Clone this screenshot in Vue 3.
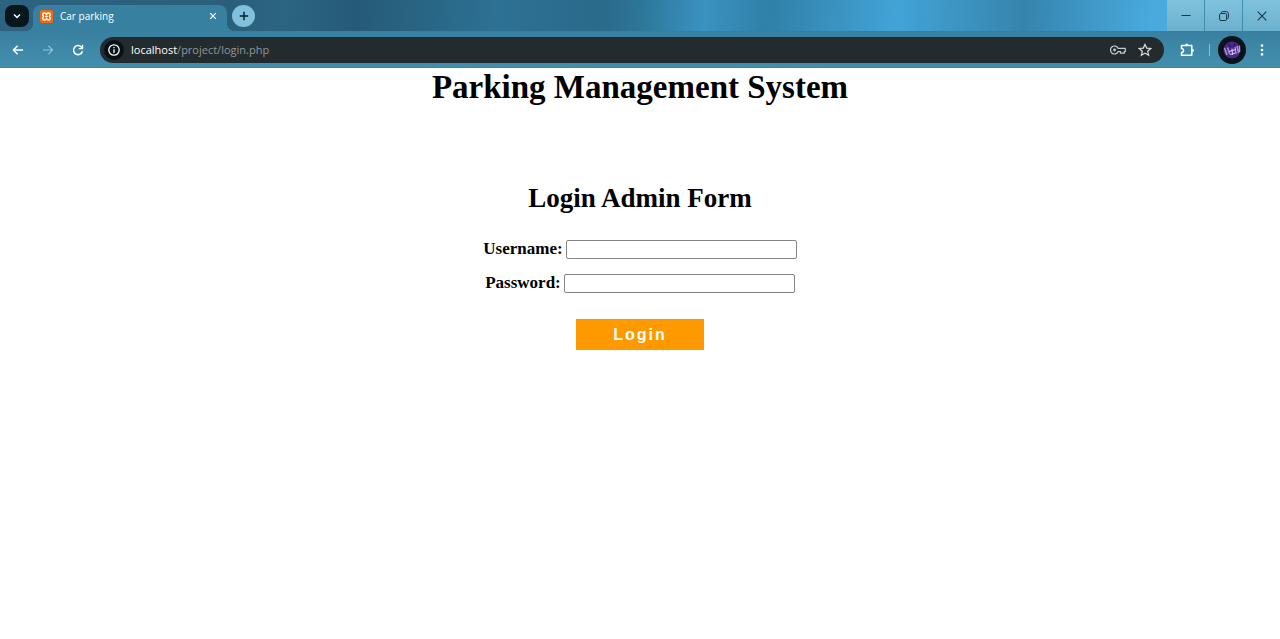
<script setup>
import { ref } from 'vue'

const username = ref('')
const password = ref('')
const address = 'localhost'
const path = '/project/login.php'
</script>

<template>
  <div class="browser">
    <header class="chrome">
      <div class="tabstrip">
        <button class="tab-search" aria-label="Search tabs">
          <svg width="10" height="10" viewBox="0 0 10 10"><path d="M2 3.5 5 6.5 8 3.5" fill="none" stroke="#fff" stroke-width="1.5" /></svg>
        </button>
        <div class="tab">
          <svg class="favicon" width="13" height="13" viewBox="0 0 13 13">
            <rect width="13" height="13" rx="2" fill="#f4690f" />
            <path d="M6.5 4.4Q6 3 4.4 3 2.8 3 2.8 4.6 2.8 5.8 3.6 6.5 2.8 7.2 2.8 8.4 2.8 10 4.4 10 6 10 6.5 8.6 7 10 8.6 10 10.2 10 10.2 8.4 10.2 7.2 9.4 6.5 10.2 5.8 10.2 4.6 10.2 3 8.6 3 7 3 6.5 4.4ZM5.3 6.5H7.7" fill="none" stroke="#fff" stroke-width="1.5" stroke-linejoin="round" />
          </svg>
          <span class="tab-title">Car parking</span>
          <button class="tab-close" aria-label="Close tab">
            <svg width="8" height="8" viewBox="0 0 8 8"><path d="M1.2 1.2 6.8 6.8M6.8 1.2 1.2 6.8" stroke="#fff" stroke-width="1.2" /></svg>
          </button>
        </div>
        <button class="new-tab" aria-label="New tab">
          <svg width="10" height="10" viewBox="0 0 10 10"><path d="M5 .8V9.2M.8 5H9.2" stroke="#08222c" stroke-width="1.5" /></svg>
        </button>
        <div class="window-controls">
          <button aria-label="Minimize"><svg width="10" height="10" viewBox="0 0 10 10"><path d="M.5 4.5H9.5" stroke="#173744" /></svg></button>
          <button aria-label="Restore"><svg width="10" height="10" viewBox="0 0 10 10"><path d="M2.5 2.2V1.6Q2.5.6 3.5.6H7.4Q9.4.6 9.4 2.6V6.4Q9.4 7.5 8.2 7.5" fill="none" stroke="#173744" /><rect x=".6" y="2.5" width="7" height="7" rx="1.3" fill="none" stroke="#173744" /></svg></button>
          <button aria-label="Close"><svg width="10" height="10" viewBox="0 0 10 10"><path d="M.7.7 9.3 9.3M9.3.7.7 9.3" stroke="#173744" stroke-width="1.1" /></svg></button>
        </div>
      </div>

      <div class="toolbar">
        <nav class="history">
          <button aria-label="Back"><svg width="12" height="12" viewBox="0 0 12 12"><path d="M11 6H1.6M5.6 1.8 1.4 6 5.6 10.2" fill="none" stroke="#fff" stroke-width="1.4" /></svg></button>
          <button aria-label="Forward"><svg width="12" height="12" viewBox="0 0 12 12"><path d="M1 6H10.4M6.4 1.8 10.6 6 6.4 10.2" fill="none" stroke="#8fc6dc" stroke-width="1.2" /></svg></button>
          <button aria-label="Reload"><svg width="12" height="12" viewBox="0 0 12 12"><path d="M10.4 7.2A4.5 4.5 0 1 1 9.2 2.9L10.4 4.2" fill="none" stroke="#fff" stroke-width="1.5" /><path d="M11.2.8V5.2H6.8V3.9H9.9V.8Z" fill="#fff" /></svg></button>
        </nav>
        <div class="omnibox">
          <button class="site-info" aria-label="Site information">
            <svg width="12" height="12" viewBox="0 0 12 12"><circle cx="6" cy="6" r="5.2" fill="none" stroke="#fff" stroke-width="1.3" /><path d="M6 5.3V9M6 3V4.3" stroke="#fff" stroke-width="1.3" /></svg>
          </button>
          <span class="url">{{ address }}<span class="path">{{ path }}</span></span>
          <button class="key" aria-label="Manage passwords">
            <svg width="16" height="10" viewBox="0 0 16 10"><path d="M8.2 3.4A4 4 0 1 0 8.2 6.6H10.5V8.2H14.2V6.6H15.3V3.4Z" fill="none" stroke="#c3cccf" stroke-width="1.2" stroke-linejoin="round" /><circle cx="4.6" cy="5" r="1.4" fill="#c3cccf" /></svg>
          </button>
          <button class="star" aria-label="Bookmark this tab">
            <svg width="14" height="14" viewBox="0 0 14 14"><path d="M7 1.4 8.7 5.1 12.8 5.5 9.7 8.2 10.6 12.2 7 10.1 3.4 12.2 4.3 8.2 1.2 5.5 5.3 5.1Z" fill="none" stroke="#dbe1e3" stroke-width="1.2" /></svg>
          </button>
        </div>
        <button class="extensions" aria-label="Extensions">
          <svg width="15" height="14" viewBox="0 0 15 14"><path d="M1.5 2.5H11.8V12.2H1.5V9.4A2 2 0 0 0 1.5 5.4Z" fill="none" stroke="#fff" stroke-width="1.5" stroke-linejoin="round" /><path d="M5 2.2A1.7 1.7 0 0 1 8.4 2.2ZM12.2 5.7A1.7 1.7 0 0 1 12.2 9.1Z" fill="#fff" /></svg>
        </button>
        <span class="divider"></span>
        <button class="profile" aria-label="Profile">
          <svg width="28" height="28" viewBox="0 0 28 28">
            <circle cx="14" cy="14" r="14" fill="#08131a" />
            <circle cx="14" cy="14" r="8.5" fill="#50268c" />
            <path d="M6.5 12 9 19M9.5 11.5 11.5 18M19 10 20.5 17M21.5 9.5V16M17 11 18 18" stroke="#9f9bd2" stroke-width="1.4" />
            <path d="M11 15.5 18 13.5M14 12.5 14.6 19M12 18.5 17 17" stroke="#d2cfe9" stroke-width="1.1" />
            <path d="M10 7.5 13 11.5M17 7 15.5 11" stroke="#2b1262" stroke-width="1.2" />
          </svg>
        </button>
        <button class="menu" aria-label="Menu">
          <svg width="4" height="12" viewBox="0 0 4 12"><g fill="#fff"><circle cx="2" cy="1.6" r="1.3" /><circle cx="2" cy="6" r="1.3" /><circle cx="2" cy="10.4" r="1.3" /></g></svg>
        </button>
      </div>
    </header>

    <main>
      <h1>Parking Management System</h1>
      <form @submit.prevent>
        <h2>Login Admin Form</h2>
        <div class="field">
          <label for="username">Username:</label>
          <input id="username" v-model="username" type="text" />
        </div>
        <div class="field">
          <label for="password">Password:</label>
          <input id="password" v-model="password" type="password" />
        </div>
        <button class="login" type="submit">Login</button>
      </form>
    </main>
  </div>
</template>

<style>
body {
  margin: 0;
  background: #fff;
}
</style>

<style scoped>
* {
  box-sizing: border-box;
}

button {
  display: flex;
  align-items: center;
  justify-content: center;
  flex: none;
  padding: 0;
  border: 0;
  background: none;
}

.chrome {
  font-family: "Open Sans", "Noto Sans", sans-serif;
}

.tabstrip {
  display: flex;
  height: 31px;
  padding-left: 5px;
  background: linear-gradient(95deg, #2d6380 0%, #2a5f7c 18%, #2b6582 22%, #255b77 28%, #2d7194 39%, #2a6a8b 47%, #2d7698 50%, #3a92c0 55%, #3080a8 60%, #42a4d6 70%, #3684ad 80%, #3c94c2 84%, #4aaadd 90%, #49a5d3 100%);
}

.tab-search {
  width: 24px;
  height: 22px;
  margin-top: 5px;
  border-radius: 8px;
  background: #08161d;
}

.tab {
  position: relative;
  display: flex;
  align-items: center;
  width: 194px;
  height: 26px;
  margin: 5px 0 0 4px;
  padding: 0 10px 4px 7px;
  border-radius: 8px 8px 0 0;
  background: #37809f;
}

.tab::before,
.tab::after {
  content: "";
  position: absolute;
  bottom: 0;
  width: 8px;
  height: 8px;
}

.tab::before {
  right: 100%;
  background: radial-gradient(circle at 0 0, transparent 8px, #37809f 8px);
}

.tab::after {
  left: 100%;
  background: radial-gradient(circle at 100% 0, transparent 8px, #37809f 8px);
}

.tab-title {
  flex: 1;
  margin-left: 7px;
  color: #fff;
  font-size: 10px;
}

.new-tab {
  width: 23px;
  height: 22px;
  margin: 5px 0 0 5px;
  border-radius: 50%;
  background: #80c1dc;
}

.window-controls {
  display: flex;
  gap: 1px;
  margin-left: auto;
  background: #3d8fb0;
}

.window-controls button {
  width: 37px;
  height: 31px;
  background: linear-gradient(#80c2dc, #6bb1ce);
}

.toolbar {
  display: flex;
  align-items: center;
  height: 37px;
  padding: 0 16px 0 12px;
  border-top: 1px solid #397f9d;
  border-bottom: 1px solid #4f8298;
  background: linear-gradient(#3980a0, #438fae);
}

.history {
  display: flex;
  gap: 18px;
  margin-right: 16px;
}

.omnibox {
  display: flex;
  align-items: center;
  flex: 1;
  height: 26px;
  padding: 0 12px 0 4px;
  border-radius: 13px;
  background: #242b2f;
}

.site-info {
  width: 20px;
  height: 20px;
  border-radius: 50%;
  background: #081116;
}

.url {
  flex: 1;
  margin-left: 7px;
  color: #fff;
  font-size: 11px;
}

.path {
  color: #8d979c;
}

.star {
  margin-left: 12px;
}

.extensions {
  margin-left: 16px;
}

.divider {
  width: 1px;
  height: 12px;
  margin: 0 8px 0 14px;
  background: #7cc5df;
}

.menu {
  margin-left: 14px;
}

main {
  color: #000;
  font-family: "Liberation Serif", "Times New Roman", serif;
  font-weight: 700;
  text-align: center;
}

h1 {
  margin: 0;
  font-size: 33px;
  line-height: 38px;
}

form {
  padding-top: 77px;
}

h2 {
  margin: 0 0 27px;
  font-size: 27px;
  line-height: 30px;
}

.field {
  display: flex;
  align-items: center;
  justify-content: center;
  gap: 3px;
  height: 19px;
  margin-bottom: 15px;
  font-size: 17px;
}

.field label {
  padding-bottom: 2px;
}

.field input {
  width: 231px;
  height: 19px;
  padding: 1px 2px;
  border: 1px solid #858585;
  border-radius: 2px;
  background: #fff;
}

.login {
  width: 128px;
  height: 31px;
  margin: 26px auto 0;
  background: #ff9900;
  color: #fff;
  font-family: "Liberation Sans", Arial, sans-serif;
  font-size: 16px;
  font-weight: 700;
  letter-spacing: 2px;
}
</style>
